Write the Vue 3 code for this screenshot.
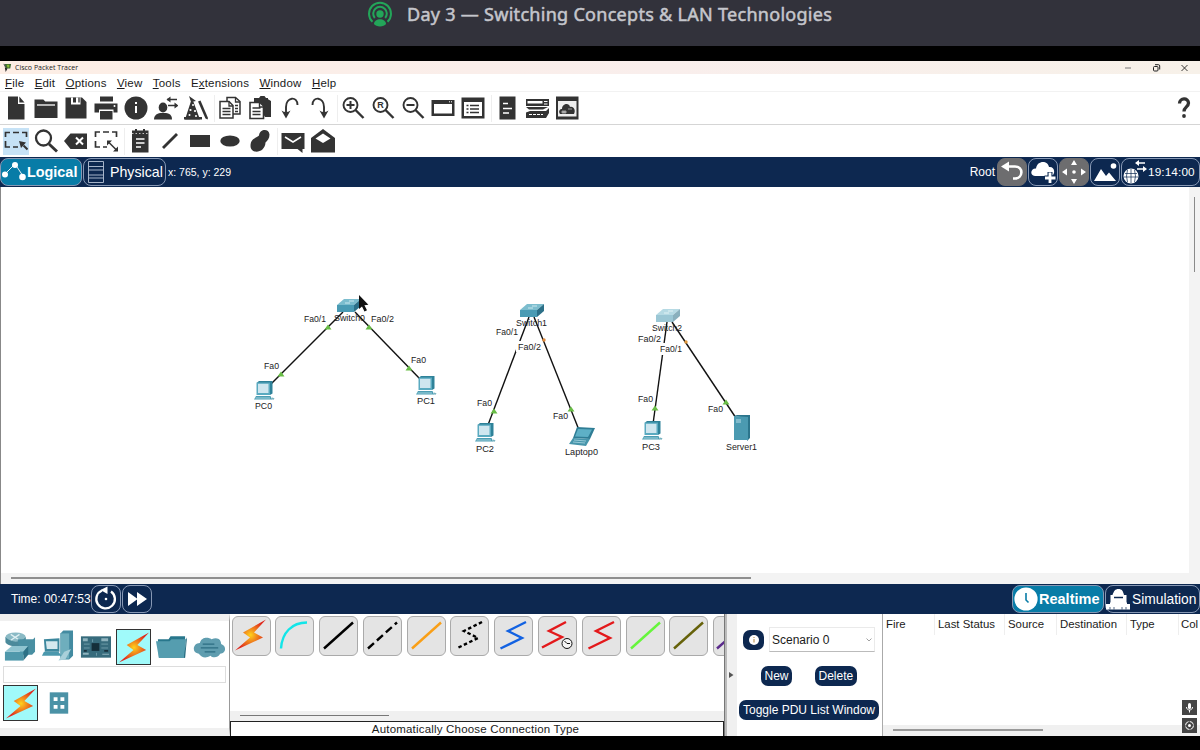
<template>
  <div class="screen">
    <header class="lesson">
      <svg class="cast" viewBox="0 0 26 26" v-html="glyphs.cast"></svg>
      <span class="lesson-title">Day 3 — Switching Concepts &amp; LAN Technologies</span>
    </header>

    <main class="app">
      <div class="titlebar">
        <svg class="logo" viewBox="0 0 10 10" v-html="glyphs.logo"></svg>
        <span class="app-name">Cisco Packet Tracer</span>
        <svg class="win-buttons" viewBox="0 0 80 12" v-html="glyphs.windowButtons"></svg>
      </div>

      <nav class="menu">
        <span v-for="m in menu" :key="m.join('')">{{ m[0] }}<u>{{ m[1] }}</u>{{ m[2] }}</span>
      </nav>

      <div class="toolbar">
        <div v-for="(group, i) in mainTools" :key="i" class="group">
          <span v-for="name in group" :key="name" class="tool">
            <svg viewBox="0 0 24 24" v-html="glyphs[name]"></svg>
          </span>
        </div>
        <span class="tool help"><svg viewBox="0 0 24 24" v-html="glyphs.help"></svg></span>
      </div>

      <div class="toolbar second">
        <div v-for="(group, i) in drawTools" :key="i" class="group">
          <span v-for="name in group" :key="name" class="tool" :class="{ active: name === 'select' }">
            <svg viewBox="0 0 24 24" v-html="glyphs[name]"></svg>
          </span>
        </div>
      </div>

      <div class="bar view-bar">
        <div class="tab logical active">
          <svg viewBox="0 0 24 24" v-html="glyphs.logical"></svg><b>Logical</b>
        </div>
        <div class="tab physical">
          <svg viewBox="0 0 18 24" v-html="glyphs.physical"></svg><span>Physical</span>
        </div>
        <span class="coords">x: 765, y: 229</span>
        <span class="root">Root</span>
        <div class="nav-btn gray"><svg viewBox="0 0 28 28" v-html="glyphs.back"></svg></div>
        <div class="nav-btn"><svg viewBox="0 0 28 28" v-html="glyphs.cloudPlus"></svg></div>
        <div class="nav-btn gray"><svg viewBox="0 0 28 28" v-html="glyphs.move"></svg></div>
        <div class="nav-btn"><svg viewBox="0 0 28 28" v-html="glyphs.image"></svg></div>
        <div class="nav-btn clock">
          <svg viewBox="0 0 26 28" v-html="glyphs.globe"></svg><span>19:14:00</span>
        </div>
      </div>

      <div class="workspace">
        <svg class="canvas" viewBox="1 187 1188 386">
          <defs>
            <g id="pc">
              <path d="M-6-8.500L-4-10H9.500V2.500L7 4z" fill="#2f8299" />
              <path d="M-6.500-8.500H7V4H-6.500z" fill="#5aaac0" />
              <path d="M-5-7.200H5.500V2H-5z" fill="#cfe6ef" />
              <path d="M-7 5H7.500L9 8.500H-9z" fill="#4c9db3" />
              <path d="M-7.500 7H7" stroke="#b9dfe8" stroke-width=".8" />
              <path d="M9 6.500l2.500.8-.8 1.500-2.500-.5z" fill="#79b3c0" />
            </g>
            <g id="switch">
              <path d="M-12-1L-5-7H12L5-1z" fill="#7cbdce" />
              <path d="M-12-1H5V6H-12z" fill="#4a9bb4" />
              <path d="M5-1L12-7V0L5 6z" fill="#2c7088" />
              <path d="M-4-3h5M0-5h5" stroke="#d2edf3" stroke-width=".9" />
            </g>
            <g id="laptop">
              <path d="M-5-10L13-9 8 2-9 1z" fill="#2f7d95" />
              <path d="M-4-8L10-7.500 6 0-7-.5z" fill="#5eb0c6" />
              <path d="M-9 1L8 2 4 9-13 7z" fill="#4795ab" />
              <path d="M-8 3L4 4M-9 5L3 6" stroke="#9fd0dc" stroke-width=".9" />
            </g>
            <g id="server">
              <path d="M-8-12L-5-13H8V10L5 13V-10z" fill="#2c758c" />
              <path d="M-8-12L6-11V12H-8z" fill="#4b9ab1" />
              <path d="M-6-8h5M-6-6h5" stroke="#c5e5ee" stroke-width=".9" />
            </g>
          </defs>

          <line v-for="(l, i) in links" :key="'l' + i" :x1="l[0]" :y1="l[1]" :x2="l[2]" :y2="l[3]" class="link" />
          <rect x="516" y="341" width="26" height="11" fill="#fff" />
          <rect x="660" y="343" width="23" height="12" fill="#fff" />
          <use v-for="d in devices" :key="d.name" :href="'#' + d.kind" :x="d.x" :y="d.y" :opacity="d.faded ? 0.55 : 1" />
          <path v-for="(s, i) in states" :key="'s' + i" :d="`M${s[0] - 3.5} ${s[1] + 2.5}l3.500-5 3.500 5z`" class="up" />
          <circle cx="544" cy="340" r="1.700" fill="#e08a3c" />
          <circle cx="686" cy="342" r="1.700" fill="#e0983c" />
          <text
            v-for="(t, i) in labels" :key="'t' + i" :x="t[1]" :y="t[2]" :textLength="t[3]"
            lengthAdjust="spacingAndGlyphs" class="label"
          >{{ t[0] }}</text>
          <path d="M359 295v14l3-2.500 2.500 5 2.500-1.300-2.600-5 4-.5z" fill="#111" />
        </svg>
        <div class="v-scroll"><i></i></div>
        <div class="h-scroll"><i></i></div>
      </div>

      <div class="bar time-bar">
        <span class="time">Time: 00:47:53</span>
        <div class="nav-btn"><svg viewBox="0 0 28 28" v-html="glyphs.reset"></svg></div>
        <div class="nav-btn"><svg viewBox="0 0 28 28" v-html="glyphs.forward"></svg></div>
        <div class="tab realtime active">
          <svg viewBox="0 0 24 24" v-html="glyphs.clock"></svg><b>Realtime</b>
        </div>
        <div class="tab simulation">
          <svg viewBox="0 0 24 24" v-html="glyphs.simulation"></svg><span>Simulation</span>
        </div>
      </div>

      <div class="bottom">
        <section class="palette">
          <div class="categories">
            <span v-for="c in categories" :key="c" class="cat" :class="{ picked: c === 'bolt' }">
              <svg viewBox="0 0 34 34" v-html="glyphs[c]"></svg>
            </span>
          </div>
          <div class="search"></div>
          <div class="subs">
            <span class="cat picked"><svg viewBox="0 0 34 34" v-html="glyphs.bolt"></svg></span>
            <span class="cat"><svg viewBox="0 0 34 34" v-html="glyphs.gridBox"></svg></span>
          </div>
        </section>

        <section class="cables">
          <div class="cable-row">
            <span v-for="(c, i) in cables" :key="i" class="cable">
              <svg viewBox="0 0 37 37" v-html="c"></svg>
            </span>
          </div>
          <div class="cable-scroll"><i></i></div>
          <div class="cable-name">Automatically Choose Connection Type</div>
        </section>

        <div class="splitter"><svg viewBox="0 0 6 8"><path d="M1 1l4.500 3L1 7z" fill="#555" /></svg></div>

        <section class="scenario">
          <div class="scenario-row">
            <span class="info-btn"><svg viewBox="0 0 12 12"><circle cx="6" cy="6" r="5" fill="#fff" /><path d="M6 5v3.500M6 3v1" stroke="#c09a60" stroke-width="1.200" /></svg></span>
            <span class="combo">Scenario 0<svg viewBox="0 0 6 4"><path d="M.5.5L3 3 5.500.5" fill="none" stroke="#888" stroke-width=".8" /></svg></span>
          </div>
          <div class="scenario-row actions">
            <span class="pill">New</span>
            <span class="pill">Delete</span>
          </div>
          <span class="pill wide">Toggle PDU List Window</span>
        </section>

        <section class="pdu">
          <div class="pdu-head"><span v-for="h in pduColumns" :key="h">{{ h }}</span></div>
          <div class="pdu-scroll"><i></i></div>
          <div class="overlay">
            <svg viewBox="0 0 15 15" v-html="glyphs.mic"></svg>
            <svg viewBox="0 0 15 15" v-html="glyphs.target"></svg>
          </div>
        </section>
      </div>
    </main>
  </div>
</template>

<script setup>
const menu = [
  ['', 'F', 'ile'], ['', 'E', 'dit'], ['', 'O', 'ptions'], ['', 'V', 'iew'],
  ['', 'T', 'ools'], ['E', 'x', 'tensions'], ['', 'W', 'indow'], ['', 'H', 'elp'],
]

const mainTools = [
  ['file', 'folder', 'save', 'print', 'info', 'user', 'wizard'],
  ['copy', 'paste', 'undo', 'redo'],
  ['zoomIn', 'zoomReset', 'zoomOut', 'window', 'listWindow'],
  ['doc', 'devices', 'cloudWindow'],
]

const drawTools = [
  ['select', 'search', 'erase', 'resize'],
  ['note', 'line', 'rect', 'ellipse', 'freeform'],
  ['mail', 'mailOpen'],
]

const categories = ['network', 'endDevices', 'board', 'bolt', 'folderTeal', 'cloudTeal']

const pduColumns = ['Fire', 'Last Status', 'Source', 'Destination', 'Type', 'Col']

const devices = [
  { name: 'Switch0', kind: 'switch', x: 349, y: 306 },
  { name: 'PC0', kind: 'pc', x: 263, y: 391 },
  { name: 'PC1', kind: 'pc', x: 425, y: 386 },
  { name: 'Switch1', kind: 'switch', x: 532, y: 311 },
  { name: 'PC2', kind: 'pc', x: 484, y: 433 },
  { name: 'Laptop0', kind: 'laptop', x: 582, y: 437 },
  { name: 'Switch2', kind: 'switch', x: 668, y: 316, faded: true },
  { name: 'PC3', kind: 'pc', x: 651, y: 431 },
  { name: 'Server1', kind: 'server', x: 742, y: 428 },
]

const links = [
  [343, 312, 270, 385], [355, 312, 420, 379],
  [529, 317, 488, 425], [534, 317, 579, 430],
  [667, 322, 653, 424], [672, 322, 736, 418],
]

const states = [
  [328, 327], [281, 374], [369, 327], [409, 368],
  [494, 411], [571, 409], [655, 408], [726, 402],
]

// text, x, baseline, width
const labels = [
  ['Fa0/1', 304, 322, 22], ['Switch0', 334, 321, 31], ['Fa0/2', 371, 322, 23],
  ['Fa0', 264, 369, 15], ['Fa0', 411, 363, 15], ['PC0', 255, 409, 17], ['PC1', 417, 404, 18],
  ['Switch1', 516, 326, 31], ['Fa0/1', 496, 335, 22], ['Fa0/2', 518, 350, 23],
  ['Fa0', 477, 406, 15], ['Fa0', 553, 419, 15], ['PC2', 476, 452, 18], ['Laptop0', 565, 455, 33],
  ['Switch2', 652, 331, 30], ['Fa0/2', 638, 342, 23], ['Fa0/1', 660, 352, 22],
  ['Fa0', 638, 402, 15], ['Fa0', 708, 412, 15], ['PC3', 642, 450, 18], ['Server1', 726, 450, 31],
]

const lens = '<circle cx="9.500" cy="9" r="7" fill="none" stroke="#333" stroke-width="1.900"/><path d="M14.500 14L22.500 22" stroke="#333" stroke-width="2.400"/>'
const stroke = (d, color, extra = '') =>
  `<path d="${d}" fill="none" stroke="${color}" stroke-width="2.400" ${extra}/>`
const bolt = '<path d="M33 2L10 15l7 5-15 13 28-13-9-5z" fill="url(#boltFill)"/>'

const glyphs = {
  cast: '<g fill="none" stroke="#23a559" stroke-width="2"><path d="M5.500 20.800A11 11 0 1 1 20.500 20.800"/><path d="M7.800 17A6.800 6.800 0 1 1 18.200 17"/></g><circle cx="13" cy="13" r="3.700" fill="#23a559"/><path d="M7 23C7 16.500 19 16.500 19 23 17 26.300 9 26.300 7 23z" fill="#23a559"/>',
  logo: '<path d="M2 1h7L8 6H3z" fill="#3d6b34"/><path d="M4 2h3v3H5z" fill="#8bbb35"/><path d="M2 5l3 1-2 4z" fill="#222"/><path d="M1 1l2 4" stroke="#333"/>',
  windowButtons: '<path d="M5 6h6" stroke="#777"/><rect x="33.500" y="4.500" width="4.500" height="4.500" rx="1" fill="none" stroke="#222"/><path d="M35 2.700h3.500q1.200 0 1.200 1.200V7.500" fill="none" stroke="#222"/><path d="M61.500 3l6 6M67.500 3l-6 6" stroke="#222" stroke-width=".9"/>',
  help: '<path d="M6.500 7.500C6.500 1.500 15.500 1.500 15.500 7c0 4-4.500 3.800-4.500 8.500" fill="none" stroke="#333" stroke-width="3.300"/><circle cx="11" cy="20" r="1.900"/>',

  file: '<path d="M4 .5h10V8h6.500v15.500H4z"/><path d="M15.300.5l5.200 6h-5.200z"/>',
  folder: '<path d="M.5 3.500h8.800l2 2H23.500v16.500H.5z"/><path d="M3 9h18" stroke="#fff" stroke-width="1.300"/>',
  save: '<path d="M1.500 1.500h16.500l4.500 4.500v16.500h-21z"/><path d="M7 1.500h9.500v7H7z" fill="#fff"/><path d="M9 1.500h3v5H9z"/><path d="M14 1.500h2v5h-2z" fill="#777"/>',
  print: '<path d="M6 .5h13v5H6z"/><path d="M.5 7.500h23v9h-4v-3H5v3H.5z"/><path d="M6 15h12.500v8.500H6z"/><circle cx="20.500" cy="10" r="1" fill="#fff"/>',
  info: '<circle cx="12" cy="12" r="11.500"/><path d="M12 10v7M12 6v2" stroke="#fff" stroke-width="2"/>',
  user: '<ellipse cx="9" cy="11.500" rx="4.300" ry="5"/><path d="M0 23.500c0-5 4-6 6-6.500h6c3 .5 6 1.500 6 6.500z"/><path d="M13 3.500h10M14 9.500h9" stroke="#333" stroke-width="1.500"/><path d="M16.500.500v6l-4-3zM20.500 6.500v6l4-3z"/>',
  wizard: '<path d="M8 2l8 21.500H1zM5 0l7 5-5 1z"/><path d="M0 21h18v2.500H0z"/><path d="M14 5.500l2.500-1L24 22l-.5 1.500-2-1z"/><g fill="#fff"><circle cx="9" cy="9" r="1"/><circle cx="6.500" cy="14" r="1.100"/><circle cx="11" cy="15" r="1.100"/><circle cx="5.500" cy="19" r="1"/><circle cx="12" cy="20" r="1"/></g>',
  copy: '<g fill="#fff" stroke="#333" stroke-width="1.500"><path d="M9 1.500h8.500l4.500 4V18H9z"/><path d="M2 5.500h9l4 4v12.500H2z"/></g><path d="M4.500 12.500h8M4.500 15.500h8M4.500 18.500h8M11 5.500V10h4M17.500 2v4H22M17 9.500h3M17 12.500h3M17 15.500h3" fill="none" stroke="#333" stroke-width="1.300"/>',
  paste: '<path d="M6 3l5-1 1.500-2h4L18 2l5 3v16h-6z"/><path d="M6 2h14v5H6z"/><path d="M2 6.500h10l3.500 3.500v12.500H2z" fill="#fff" stroke="#333" stroke-width="1.600"/><path d="M4.500 12h8M4.500 15.500h8M4.500 18.500h8M11.500 6.500V11h4" fill="none" stroke="#333" stroke-width="1.400"/>',
  undo: '<path d="M19.500 9C19.500-.5 8 1 8 11v6" fill="none" stroke="#333" stroke-width="1.900"/><path d="M3.500 14.500q4.500 3 9 0L8 22.500z"/>',
  redo: '<path d="M4.500 9C4.500-.5 16 1 16 11v6" fill="none" stroke="#333" stroke-width="1.900"/><path d="M11.500 14.500q4.500 3 9 0L16 22.500z"/>',
  zoomIn: lens + '<path d="M5.500 9h8M9.500 5v8" stroke="#333" stroke-width="2"/>',
  zoomReset: lens + '<text x="9.600" y="12.400" font-size="9" font-weight="700" text-anchor="middle">R</text>',
  zoomOut: lens + '<path d="M5.500 9h8" stroke="#333" stroke-width="2"/>',
  window: '<path d="M.500 4h23v16H.5z"/><path d="M3 8h18v9.500H3z" fill="#fff"/><path d="M18 5.800h1M20 5.800h1" stroke="#fff"/>',
  listWindow: '<path d="M.500 1.500h23v21H.5z"/><path d="M3 6h18v14H3z" fill="#fff"/><path d="M9 9.500h9M9 13h9M9 16.500h9M5.500 9.500h2M5.500 13h2M5.500 16.500h2" stroke="#333" stroke-width="1.500"/>',
  doc: '<path d="M4.500.500h16v23h-16z"/><path d="M8 7.500h5M8 12.500h9M8 17h6" stroke="#fff" stroke-width="1.300"/>',
  devices: '<path d="M1 3h23v7H1z"/><path d="M2.500 5h15v2.500h-15z" fill="#fff"/><path d="M19 5.500h3.500M19 8h3.500" stroke="#fff"/><path d="M1 11h22l-5 2.500H4z"/><path d="M1 16.500l4-1.500h16l3-3v5l-3 5H1z"/><path d="M4 18.500h14" stroke="#fff" stroke-dasharray="3 1"/>',
  cloudWindow: '<path d="M1 .500h22.500v23H1z"/><path d="M3 5h18.500v15.500H3z" fill="#eee"/><path d="M5 18c-2-3 0-5 2-5 0-5 7-7 8-2 4-1 6 4 4 7z"/><path d="M7 15h4v2H7zM13 13h4" fill="#bbb" stroke="#999"/>',

  select: '<path d="M1.500 8V3.500H6M9 3.500h6M18 3.500h4.500V8M1.500 12v6H6M9 18h5" fill="none" stroke="#333" stroke-width="1.700"/><path d="M23.500 20.500l-4-4" stroke="#333" stroke-width="2"/><path d="M15 12l7 1.500-5 5.500z"/>',
  search: '<circle cx="9.500" cy="9" r="7.500" fill="none" stroke="#333" stroke-width="2.300"/><path d="M15 15l8 7.500" stroke="#333" stroke-width="3"/>',
  erase: '<path d="M0 12l6.500-7.500H23v15.500H6.500z"/><path d="M12 8.500l7 7M19 8.500l-7 7" stroke="#fff" stroke-width="2"/>',
  resize: '<path d="M1.500 8V3H6M9 3h6M18 3h4.500V8M1.500 12v6H6M9 18h4" fill="none" stroke="#333" stroke-width="1.700"/><path d="M14 12.500l9 9" stroke="#333" stroke-width="1.500"/><path d="M13 11.500h5l-5 5zM24 22.500h-5l5-5z"/>',
  note: '<path d="M4 1.500h3V0h2v1.500h6V0h2v1.500h3.500v22H4z"/><path d="M4 4.500h16.500" stroke="#fff" stroke-width=".7" stroke-dasharray="1.500 2"/><path d="M8 10h8.500M8 14h8.500M8 18h5" stroke="#fff" stroke-width="1.600"/>',
  line: '<path d="M5 19L19 5" stroke="#333" stroke-width="2.800"/>',
  rect: '<path d="M2 6h20v12H2z"/>',
  ellipse: '<ellipse cx="12" cy="12" rx="9.700" ry="5.500"/>',
  freeform: '<path d="M11 6.500C12-.5 21-.5 21.500 5.500c0 4-2 6-4 8C17 24.500 2.500 25.500 2.500 17 2.500 9 9 9 11 6.500z"/>',
  mail: '<path d="M.500 4h23v16h-2v4l-5-4H.5z"/><path d="M4 8l8 5 8-5" fill="none" stroke="#fff" stroke-width="1.500"/>',
  mailOpen: '<path d="M0 9L12 0l12 9v14.500H0z"/><path d="M4.500 9.500L12 4.500l7.500 5L12 14z" fill="#fff"/>',

  logical: '<path d="M3 14L13 4l8 12" stroke="#fff" stroke-width=".9" fill="none"/><g fill="#fff"><circle cx="3" cy="14.500" r="3"/><circle cx="13" cy="5" r="3"/><circle cx="20.500" cy="17" r="3.300"/></g>',
  physical: '<path d="M1.500 1.500h15v21h-15zM1.500 6.500h15M1.500 10h15M1.500 15h15M1.500 18h15" fill="none" stroke="#b7c3d6" stroke-width=".9"/>',
  back: '<path d="M10 8.500h7c9 0 8 12 0 12h-2" fill="none" stroke="#fff" stroke-width="2.600"/><path d="M11 3.500v10L3 8.500z" fill="#fff"/>',
  cloudPlus: '<path d="M6 18C0 17 2 10 7 10.500 8 2 19 2 20 9c6-1 7 8 2 9z" fill="#fff"/><path d="M21 14v11M15.500 20H26.500" stroke="#0d2a52" stroke-width="5"/><path d="M21 14.500v10.500M16 20h10.500" stroke="#fff" stroke-width="2.800"/>',
  move: '<g fill="#fff"><path d="M14 2l3 5h-6zM14 26l3-5h-6zM2 14l5-3.500v7zM26 14l-5-3.500v7z"/><circle cx="14" cy="14" r="1.800"/></g>',
  image: '<path d="M3 23l7-12 5 7 3-3.500 7 8.500z" fill="#fff"/><circle cx="22.500" cy="8" r="2.800" fill="#fff"/>',
  globe: '<circle cx="9" cy="18" r="7.500" fill="#fff"/><path d="M3 15.500h12M2 19h14M9 11v14M5.500 12q-2 6 0 12M12.500 12q2 6 0 12" fill="none" stroke="#0d2a52" stroke-width=".7"/><path d="M15 5h8M15 11h8" stroke="#fff" stroke-width="1.600"/><path d="M17 2v6l-4-3zM21 8v6l4-3z" fill="#fff"/>',
  reset: '<path d="M10 5.500A9.300 9.300 0 1 0 19 6.500" fill="none" stroke="#fff" stroke-width="2.300"/><path d="M8.500 5L15.500 1.500v7.500z" fill="#fff"/><circle cx="14" cy="14" r="1.300" fill="#fff"/>',
  forward: '<path d="M5 7l9 6.500V7l10 7-10 7v-6.500L5 21z" fill="#fff"/>',
  clock: '<circle cx="12" cy="12" r="11.600" fill="#fff"/><path d="M12 6v7l2.500 2.500" fill="none" stroke="#087ca7" stroke-width="1.600"/>',
  simulation: '<path d="M4.500 16V8h2C8 4 9 2 12.500 2S17 4 18 8h2.500v8zM0 17h4v2h16v-2h4.500v5.500H0z" fill="#fff"/><path d="M4 15.500h17v4H4z" fill="#fff"/><path d="M8 10.500h9" stroke="#0d2a52" stroke-width="1.500"/><path d="M4 20v2.500M8 20v2.500M16 20v2.500M20 20v2.500" stroke="#0d2a52" stroke-width=".7"/>',

  network: '<ellipse cx="13" cy="7" rx="10.500" ry="5" fill="#8bbac5"/><path d="M8 4l9 6M17 4L8 10" stroke="#e0f0f3" stroke-width="1.300"/><path d="M2.500 7v5c3 5 17 6 21 0V7q-10 9-21 0z" fill="#4b8a9b"/><path d="M15 9h16l2-2v15l-3 3H18z" fill="#498fa2"/><path d="M2 22l7-6h17l-5 6z" fill="#8fc4d0"/><path d="M2 22h19v9H2z" fill="#4f98ab"/><path d="M21 22l5-6v9l-5 6z" fill="#2d7186"/>',
  endDevices: '<path d="M20 3l3-3h10v26l-4 4h-9z" fill="#438ba1"/><path d="M20 3h9v26h-9z" fill="#6eaebd"/><path d="M3 9l16-1v14H4z" fill="#3c879d"/><path d="M5 11h12v8H6z" fill="#d5e8ee"/><path d="M3 22h15l3 4H1z" fill="#4b98ad"/><path d="M18 31l6-9 7-3-6 11z" fill="#a9d0da"/>',
  board: '<path d="M2 6h31v22H2z" fill="#376b7c"/><g fill="#8fb3bd"><path d="M4 8h5v3H4zM23 8h7v3h-7zM4 23h6v2H4zM24 24h7v1h-7z"/></g><path d="M13 13h8v8h-8z" fill="#152f3a"/><path d="M5 14h6M23 14h7M5 18h6M23 18h7M14 9v3M18 23v3" stroke="#6d9ba8"/><path d="M5 20h3v2H5zM26 20h4v2h-4z" fill="#18303c"/>',
  bolt: '<defs><radialGradient id="boltFill"><stop offset="0" stop-color="#ffd21c"/><stop offset=".4" stop-color="#f18a1c"/><stop offset="1" stop-color="#df271d"/></radialGradient></defs>' + bolt,
  folderTeal: '<path d="M3 9h11l2-3h15v22H4z" fill="#28778c"/><path d="M1 11h14l2-2h15l-2 19H4z" fill="#559daf"/><path d="M32 9l1-2-2 21h-1z" fill="#23677b"/>',
  cloudTeal: '<path d="M6 24c-8-1-6-11 1-11 2-7 9-6 12-4 7-3 10 1 10 5 6 2 5 10-1 10-3 5-8 4-10 2-5 3-9 2-12-2z" fill="#5f9daf"/><path d="M10 14h12M8 18h18M12 22h11" stroke="#2d6d82" stroke-width="1.300"/>',
  gridBox: '<path d="M8 6h19v22H8z" fill="#4b92a6"/><path d="M12 11h4v4h-4zM19 11h4v4h-4zM12 19h4v4h-4zM19 19h4v4h-4z" fill="#fff"/>',
  mic: '<rect width="15" height="15" fill="#454545"/><rect x="6" y="3" width="3" height="6" rx="1.500" fill="#fff"/><path d="M4.500 7c0 4 6 4 6 0M7.500 10v2.500" fill="none" stroke="#fff"/>',
  target: '<rect width="15" height="15" fill="#454545"/><circle cx="7.500" cy="7.500" r="4" fill="none" stroke="#fff" stroke-dasharray="5 1.200"/><circle cx="7.500" cy="7.500" r="1.500" fill="#fff"/>',
}

const zig = 'M31 4.500L13 13.500l14 7L5.500 31'

const cables = [
  bolt,
  stroke('M5 31C6 15 16 5 31 5', '#12e5e8'),
  stroke('M4 31L33 5', '#000'),
  stroke('M4 31L33 5', '#000', 'stroke-dasharray="8 4"'),
  stroke('M4 31L33 5', '#f99f17'),
  stroke(zig, '#000', 'stroke-dasharray="3.500 2.500"'),
  stroke(zig, '#1262e2'),
  stroke('M27 4.500L10 13.500l13 6L3 30', '#e3191b') +
    '<circle cx="28" cy="26" r="5" fill="#f4f4f4" stroke="#111"/><path d="M25.500 23.500L28 26h3" fill="none" stroke="#111"/>',
  stroke(zig, '#e3191b'),
  stroke('M4 31L33 5', '#66f53c'),
  stroke('M4 31L33 5', '#66620a'),
  stroke('M3 31L33 5', '#5b2b8c'),
]
</script>

<style>
body {
  background: #000;
  overflow: hidden;
}
</style>

<style scoped>
.screen {
  width: 1200px;
  height: 750px;
  background: #000;
  font-family: "Liberation Sans", Arial, sans-serif;
  color: #1a1a1a;
  overflow: hidden;
  white-space: nowrap;
}

svg {
  display: block;
  flex-shrink: 0;
}

.lesson {
  height: 46px;
  background: #32323b;
  display: flex;
  box-sizing: border-box;
  padding: 1px 0 0 367px;
}

.cast {
  width: 26px;
  height: 26px;
}

.lesson-title {
  font-family: "Noto Sans", sans-serif;
  font-size: 18px;
  line-height: 26px;
  letter-spacing: 0.290px;
  -webkit-text-stroke: 0.500px #c5c6cc;
  margin-left: 14px;
  color: #c5c6cc;
}

.app {
  margin-top: 15px;
  height: 675px;
  background: #fff;
  display: flex;
  flex-direction: column;
}

.titlebar {
  height: 13px;
  background: linear-gradient(90deg, #fdeee5, #f9eeec 55%, #f7f1e9);
  display: flex;
  align-items: center;
}

.logo {
  width: 9px;
  height: 9px;
  margin-left: 3px;
}

.app-name {
  font: 7px "Open Sans", sans-serif;
  margin-left: 3px;
}

.win-buttons {
  width: 80px;
  height: 12px;
  margin-left: auto;
}

.menu {
  height: 18px;
  box-sizing: border-box;
  border-bottom: 1px solid #f2f2f2;
  display: flex;
  gap: 10.300px;
  padding-left: 5px;
  font-size: 11.500px;
  letter-spacing: 0.200px;
  line-height: 19px;
}

.menu u {
  text-underline-offset: 1px;
}

.toolbar {
  height: 33px;
  box-sizing: border-box;
  border-bottom: 1px solid #d5d5d5;
  display: flex;
  align-items: center;
  padding-left: 1px;
}

.toolbar.second {
  height: 32px;
  border: 0;
}

.group {
  display: flex;
}

.group + .group {
  margin-left: 2.600px;
  border-left: 1px solid #eee;
}

.tool {
  width: 30px;
  height: 27px;
  display: flex;
  align-items: center;
  justify-content: center;
}

.tool svg {
  width: 24px;
  height: 24px;
  fill: #333;
}

.tool.active {
  background: #c6e2f6;
  background-clip: content-box;
  padding: 0 2px;
  width: 26px;
}

.tool.help {
  margin-left: auto;
}

.bar {
  background: #0d2850;
  color: #fff;
  display: flex;
  align-items: center;
}

.view-bar {
  height: 30px;
  flex-shrink: 0;
}

.tab {
  height: 28px;
  box-sizing: border-box;
  border: 1px solid #8798b4;
  border-radius: 8px;
  display: flex;
  align-items: center;
}

.tab.active {
  background: #087ca7;
}

.tab svg {
  width: 24px;
  height: 24px;
}

.logical {
  width: 82px;
  font-size: 14.400px;
  padding-left: 1px;
  gap: 1px;
}

.physical {
  width: 83px;
  margin-left: 1px;
  font-size: 14.200px;
  padding-left: 3px;
  gap: 5px;
}

.physical svg {
  width: 18px;
}

.coords {
  font-size: 10.500px;
  margin-left: 2px;
}

.root {
  margin-left: auto;
  margin-right: 2px;
  font-size: 12px;
}

.nav-btn {
  width: 30px;
  height: 28px;
  box-sizing: border-box;
  border: 1px solid #8798b4;
  border-radius: 8px;
  display: flex;
  align-items: center;
  justify-content: center;
  margin-right: 1px;
}

.nav-btn svg {
  width: 28px;
  height: 28px;
}

.nav-btn.gray {
  background: #6d6d6f;
  border-color: #6d6d6f;
}

.nav-btn.clock {
  width: 79px;
  margin-right: 0;
  justify-content: flex-start;
  font-size: 11.800px;
  letter-spacing: 0.100px;
}

.nav-btn.clock svg {
  width: 26px;
}

.workspace {
  height: 397px;
  flex-shrink: 0;
  box-sizing: border-box;
  border-left: 1px solid #888;
  display: grid;
  grid-template-columns: 1fr 11px;
  grid-template-rows: 386px 11px;
}

.canvas {
  width: 1188px;
  height: 386px;
}

.link {
  stroke: #111;
  stroke-width: 1.400;
}

.up {
  fill: #68bd45;
}

.label {
  font-size: 8.700px;
  fill: #222;
}

.v-scroll,
.h-scroll {
  background: #f3f3f3;
}

.v-scroll i {
  display: block;
  width: 1px;
  height: 75px;
  margin: 10px 0 0 5px;
  background: #8a8a8a;
}

.h-scroll {
  grid-column: 1 / 3;
}

.h-scroll i {
  display: block;
  height: 2px;
  width: 740px;
  margin: 4px 0 0 10px;
  background: #8f8f8f;
}

.time-bar {
  height: 30px;
  flex-shrink: 0;
}

.time {
  font-size: 12px;
  margin-left: 11px;
  width: 80px;
}

.realtime {
  margin-left: auto;
  width: 92px;
  gap: 1px;
  font-size: 14.500px;
  padding-left: 1px;
}

.simulation {
  width: 95px;
  margin-left: 1px;
  gap: 2px;
  font-size: 13.800px;
}

.bottom {
  flex: 1;
  display: flex;
  min-height: 0;
}

.palette {
  width: 230px;
  box-sizing: border-box;
  border-top: 7px solid #f0f0f0;
  border-bottom: 8px solid #f0f0f0;
  border-right: 1px solid #999;
}

.categories {
  height: 44px;
  display: flex;
  align-items: center;
  padding: 7px 0 0 2px;
  box-sizing: border-box;
  gap: 3px;
}

.cat {
  width: 35px;
  height: 36px;
  box-sizing: border-box;
  display: flex;
  align-items: center;
  justify-content: center;
}

.cat svg {
  width: 33px;
  height: 34px;
}

.cat.picked {
  background: #a0fafa;
  border: 1px solid #333;
}

.search {
  height: 17px;
  box-sizing: border-box;
  border: 1px solid #ddd;
  margin: 1px 3px 2px;
}

.subs {
  display: flex;
  gap: 3px;
  padding-left: 3px;
}

.cables {
  width: 495px;
  display: flex;
  flex-direction: column;
  border-right: 1px solid #777;
  box-sizing: border-box;
}

.cable-row {
  flex: 1;
  display: flex;
  gap: 4.800px;
  padding: 2px 0 0 1.500px;
  overflow: hidden;
}

.cable {
  width: 39px;
  height: 40px;
  box-sizing: border-box;
  flex-shrink: 0;
  background: #e4e4e4;
  border: 1px solid #aaa;
  border-radius: 6px;
}

.cable svg {
  width: 37px;
  height: 38px;
}

.cable-scroll {
  height: 10px;
  background: #f0f0f0;
}

.cable-scroll i {
  display: block;
  height: 1px;
  width: 149px;
  margin: 4px 0 0 10px;
  background: #777;
}

.cable-name {
  height: 15px;
  box-sizing: border-box;
  border: 1px solid #222;
  border-bottom: 0;
  text-align: center;
  font-size: 11.500px;
  letter-spacing: 0.190px;
  padding-right: 3px;
  line-height: 15px;
}

.splitter {
  width: 12px;
  box-sizing: border-box;
  background: #f0f0f0;
  border-left: 2px solid #bbb;
  display: flex;
  align-items: center;
  padding-left: 1px;
}

.splitter svg {
  width: 6px;
  height: 8px;
}

.scenario {
  width: 145px;
  box-sizing: border-box;
  padding: 13px 3px 0 2px;
}

.scenario-row {
  display: flex;
  align-items: center;
  padding: 0 4px;
  gap: 5px;
}

.info-btn {
  width: 21px;
  height: 20px;
  border-radius: 7px;
  background: #0d2850;
  display: flex;
  align-items: center;
  justify-content: center;
}

.info-btn svg {
  width: 12px;
  height: 12px;
}

.combo {
  flex: 1;
  height: 25px;
  box-sizing: border-box;
  border: 1px solid #eaeaea;
  border-bottom-color: #bbb;
  padding: 0 2px;
  display: flex;
  align-items: center;
  justify-content: space-between;
  font-size: 12px;
}

.combo svg {
  width: 6px;
  height: 4px;
}

.actions {
  margin-top: 14px;
  padding-left: 22px;
  gap: 23px;
}

.pill {
  background: #0d2850;
  color: #fff;
  border-radius: 7px;
  height: 20px;
  line-height: 20px;
  padding: 0 3.500px;
  font-size: 12px;
}

.pill.wide {
  display: block;
  margin-top: 14px;
  padding: 0;
  text-align: center;
}

.pdu {
  flex: 1;
  min-width: 0;
  border-left: 1px solid #aaa;
  position: relative;
  display: flex;
  flex-direction: column;
  justify-content: space-between;
}

.pdu-head {
  display: grid;
  grid-template-columns: 52px 70px 52px 70px 52px 21px;
  font-size: 11.400px;
  line-height: 21px;
  height: 21px;
}

.pdu-head span {
  padding-left: 3px;
  border-right: 1px solid #eee;
}

.pdu-head span:last-child {
  padding-left: 2px;
  border: 0;
}

.pdu-scroll {
  height: 11px;
  background: #f0f0f0;
}

.pdu-scroll i {
  display: block;
  height: 2px;
  width: 150px;
  margin: 4px 0 0 10px;
  background: #999;
}

.overlay {
  position: absolute;
  right: 3px;
  bottom: 3px;
  display: grid;
  gap: 3px;
}

.overlay svg {
  width: 15px;
  height: 15px;
}
</style>
